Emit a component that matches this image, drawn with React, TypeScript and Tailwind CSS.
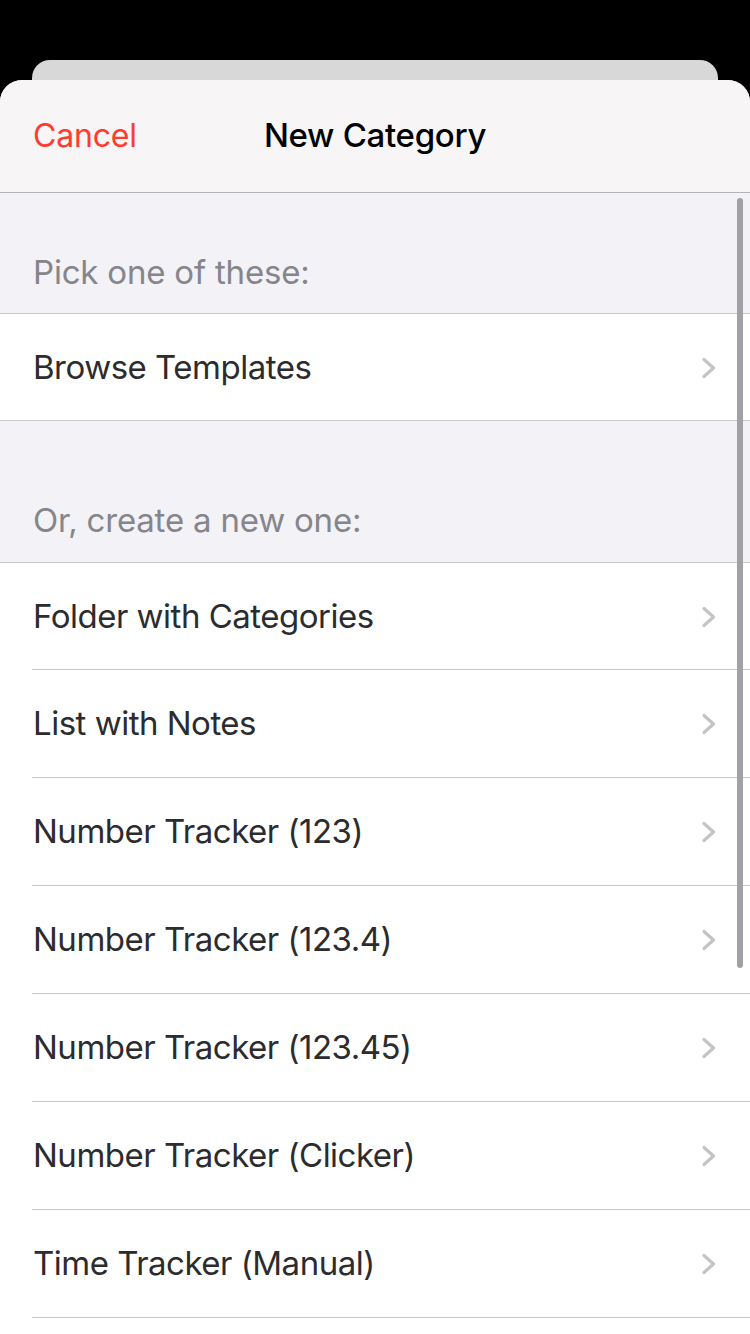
import React from "react";

const Chevron = () => (
  <svg width="18" height="24" viewBox="0 0 18 24" fill="none">
    <path d="M4 3.5 L13.5 12 L4 20.5" stroke="#c4c4c7" strokeWidth="3.2" strokeLinecap="round" strokeLinejoin="round" />
  </svg>
);

const Row = ({ label, last, first }: { label: string; last?: boolean; first?: boolean }) => (
  <div className={`relative flex items-center justify-between bg-white pl-[33px] pr-[32px] ${first ? "h-[107px]" : "h-[108px]"}`}>
    <span className="text-[33px] tracking-[-0.5px] text-[#2c2c2e]">{label}</span>
    <Chevron />
    <div className={`absolute bottom-0 right-0 h-px bg-[#c8c7cc] ${last ? "left-0" : "left-[32px]"}`} />
  </div>
);

export default function App() {
  const items = [
    "Folder with Categories",
    "List with Notes",
    "Number Tracker (123)",
    "Number Tracker (123.4)",
    "Number Tracker (123.45)",
    "Number Tracker (Clicker)",
    "Time Tracker (Manual)",
  ];
  return (
    <div
      className="relative h-[1334px] w-[750px] overflow-hidden bg-black"
      style={{ fontFamily: "Inter, 'Noto Sans', sans-serif" }}
    >
      <div className="mx-[32px] mt-[60px] h-[40px] rounded-t-[18px] bg-[#d8d8d8]" />
      <div className="absolute left-0 right-0 top-[80px] bottom-0 overflow-hidden rounded-t-[22px] bg-[#f2f2f7]">
        <div className="relative flex h-[113px] items-center border-b border-[#b4b3b8] bg-[#f7f5f6] px-[33px]">
          <span className="text-[32px] tracking-[-0.2px] text-[#ff3b30]">Cancel</span>
          <span className="absolute left-0 right-0 text-center text-[33px] tracking-[-0.3px] font-medium text-black">New Category</span>
        </div>
        <div className="flex h-[120px] items-end pb-[16px] pl-[33px]">
          <span className="text-[33px] tracking-[-0.2px] text-[#86858b]">Pick one of these:</span>
        </div>
        <div className="border-t border-[#c8c7cc]">
          <Row label="Browse Templates" last first />
        </div>
        <div className="flex h-[141px] items-end pb-[17px] pl-[33px]">
          <span className="text-[33px] tracking-[-0.2px] text-[#86858b]">Or, create a new one:</span>
        </div>
        <div className="border-t border-[#c8c7cc]">
          {items.map((l, i) => (
            <Row key={l} label={l} first={i === 0} />
          ))}
          <div className="h-[40px] bg-white" />
        </div>
        <div className="absolute right-[7px] top-[118px] h-[770px] w-[6px] rounded-full bg-[#a1a1a5]" />
      </div>
    </div>
  );
}
